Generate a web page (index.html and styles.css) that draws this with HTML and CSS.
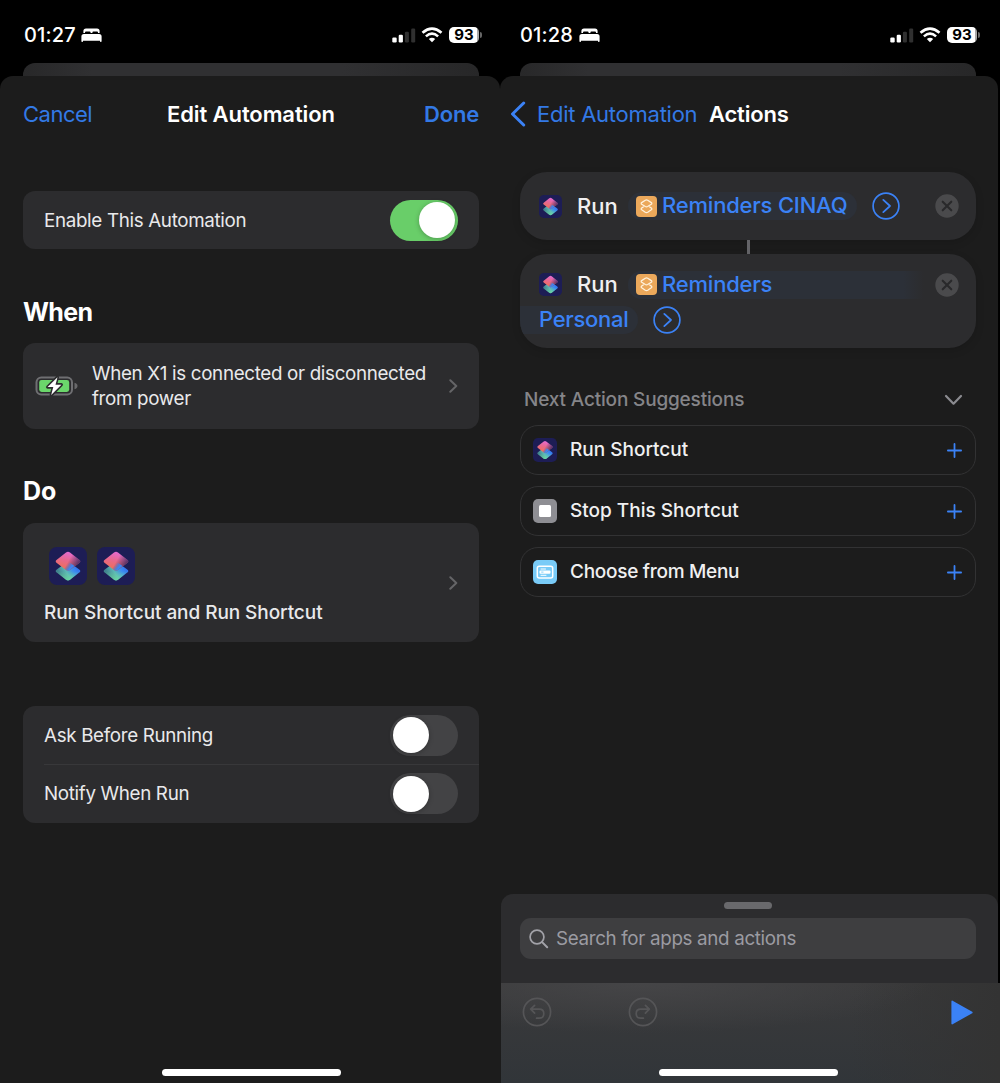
FILE: index.html
```html
<!DOCTYPE html>
<html lang="en">
<head>
<meta charset="utf-8">
<title>Edit Automation</title>
<link rel="stylesheet" href="styles.css">
</head>
<body>
<svg class="defs" aria-hidden="true">
  <defs>
    <linearGradient id="top" x1="0.6" y1="0" x2="0.3" y2="1"><stop offset="0" stop-color="#e46ad6"/><stop offset="0.45" stop-color="#e8688f"/><stop offset="1" stop-color="#f0704e"/></linearGradient>
    <linearGradient id="shade" x1="0.55" y1="0.4" x2="1" y2="0.6"><stop offset="0" stop-color="#1d1d55" stop-opacity="0"/><stop offset="1" stop-color="#1d1d55" stop-opacity="0.8"/></linearGradient>
    <linearGradient id="bottom" x1="0.15" y1="0.7" x2="0.9" y2="0.4"><stop offset="0" stop-color="#3f7f8c"/><stop offset="0.4" stop-color="#5cb7b4"/><stop offset="0.75" stop-color="#3c8df0"/><stop offset="1" stop-color="#3477f0"/></linearGradient>
    <linearGradient id="mint" x1="0" y1="0.5" x2="0" y2="1"><stop offset="0" stop-color="#6fe0a0" stop-opacity="0"/><stop offset="1" stop-color="#6fe0a0" stop-opacity="0.8"/></linearGradient>
    <linearGradient id="blend" x1="0.4" y1="0.1" x2="0.8" y2="0.35"><stop offset="0" stop-color="#3c86f4" stop-opacity="0"/><stop offset="1" stop-color="#3c86f4"/></linearGradient>
    <symbol id="shortcuts" viewBox="0 0 38 38">
      <rect width="38" height="38" rx="8" fill="#1d1d55"/>
      <path d="M17.300 15.400Q19 14.200 20.700 15.400L30.200 22.400Q32.400 24 30.200 25.600L21 32.700Q19 34.100 17 32.700L7.800 25.600Q5.600 24 7.800 22.400Z" fill="url(#bottom)"/>
      <path d="M17.300 15.400Q19 14.200 20.700 15.400L30.200 22.400Q32.400 24 30.200 25.600L21 32.700Q19 34.100 17 32.700L7.800 25.600Q5.600 24 7.800 22.400Z" fill="url(#mint)"/>
      <path d="M17 5.400Q19 4 21 5.400L30.200 12.700Q32.400 14.300 30.200 15.900L21 22.900Q19 24.300 17 22.900L7.800 15.900Q5.600 14.300 7.800 12.700Z" fill="url(#top)"/>
      <path d="M17 5.400Q19 4 21 5.400L30.200 12.700Q32.400 14.300 30.200 15.900L21 22.900Q19 24.300 17 22.900L7.800 15.900Q5.600 14.300 7.800 12.700Z" fill="url(#shade)"/>
      <path d="M20.700 15.400L25.500 18.900L21 22.900Q19 24.300 17 22.900L15 21.400V17Z" fill="url(#blend)"/>
    </symbol>
    <symbol id="reminder" viewBox="0 0 21 21">
      <rect width="21" height="21" rx="4" fill="#eba85b"/>
      <g fill="none" stroke="#fff3df" stroke-width="1.250" stroke-linejoin="round" stroke-linecap="round">
        <path d="M9.300 4.300Q10.500 3.600 11.700 4.300L15.300 6.600Q16.300 7.400 15.300 8.200L11.700 10.500Q10.500 11.200 9.300 10.500L5.700 8.200Q4.700 7.400 5.700 6.600Z"/>
        <path d="M7.300 10.900L5.700 12.100Q4.700 12.900 5.700 13.700L9.300 16.200Q10.500 16.900 11.700 16.200L15.300 13.700Q16.300 12.900 15.300 12.100L13.700 10.900"/>
      </g>
    </symbol>
    <symbol id="bed" viewBox="0 0 21 14">
      <path d="M2.400 5V3Q2.400 .4 5 .4H16Q18.600 .4 18.600 3V5H17V4.500Q17 3.500 16 3.500H12.400Q11.400 3.500 11.400 4.500V5H9.600V4.500Q9.600 3.500 8.600 3.500H5Q4 3.500 4 4.500V5Z" fill="#fff"/>
      <path d="M.4 8.500Q.4 6 2.900 6H18.100Q20.600 6 20.600 8.500V13.200Q20.600 13.900 19.800 13.900Q19 13.900 19 13.200V12.700H2V13.200Q2 13.900 1.200 13.900Q.4 13.900 .4 13.200Z" fill="#fff"/>
    </symbol>
    <symbol id="signal" viewBox="0 0 24 15">
      <rect x=".3" y="9.500" width="4.400" height="5" rx="1.200" fill="#fff"/><rect x="6.700" y="6.800" width="4.200" height="7.700" rx="1.200" fill="#fff"/>
      <rect x="12.900" y="3.700" width="4" height="10.800" rx="1.200" fill="#303030"/><rect x="19.200" y=".5" width="4" height="14" rx="1.200" fill="#303030"/>
    </symbol>
    <symbol id="wifi" viewBox="0 0 22 16">
      <path d="M1.500 5.800Q11-2.400 20.500 5.800" fill="none" stroke="#fff" stroke-width="2.700"/>
      <path d="M4.900 9.400Q11 4 17.100 9.400" fill="none" stroke="#fff" stroke-width="2.600"/>
      <path d="M7.800 12.100Q11 9.300 14.200 12.100L11 15.300Z" fill="#fff"/>
    </symbol>
    <symbol id="close" viewBox="0 0 24 24"><circle cx="12" cy="12" r="11.700" fill="#4a4a4c"/><path d="M7.700 7.700L16.300 16.300M16.300 7.700L7.700 16.300" stroke="#29292b" stroke-width="2.100" stroke-linecap="round"/></symbol>
    <symbol id="go" viewBox="0 0 28 28"><circle cx="14" cy="14" r="12.900" fill="none" stroke="#3b82f6" stroke-width="1.700"/><path d="M11.300 7.900L18 14L11.300 20.100" fill="none" stroke="#3b82f6" stroke-width="1.800" stroke-linecap="round" stroke-linejoin="round"/></symbol>
    <symbol id="chevron" viewBox="0 0 9 14"><path d="M1.300 1.300L7.300 7L1.300 12.700" fill="none" stroke="#656567" stroke-width="2" stroke-linecap="round" stroke-linejoin="round"/></symbol>
    <symbol id="plus" viewBox="0 0 15 15"><path d="M7.500 .9V14.100M.9 7.500H14.100" stroke="#3b82f6" stroke-width="1.800" stroke-linecap="round"/></symbol>
  </defs>
</svg>
<main class="screens">
  <section class="phone phone-left">
    <header class="status">
      <span class="time">01:27</span><svg class="bed"><use href="#bed"/></svg>
      <svg class="signal"><use href="#signal"/></svg><svg class="wifi"><use href="#wifi"/></svg>
      <span class="battery">93</span><i class="battery-tip"></i>
    </header>
    <div class="peek"></div>
    <div class="sheet">
      <nav class="nav nav-edit"><a class="cancel">Cancel</a><h1>Edit Automation</h1><a class="done">Done</a></nav>
      <div class="card row enable"><span class="label">Enable This Automation</span><i class="toggle on"></i></div>
      <h2 class="when-title">When</h2>
      <div class="card trigger">
        <svg class="charging" viewBox="0 0 44 22">
          <rect x="1.500" y="2.500" width="35.500" height="17" rx="4.800" fill="none" stroke="#6f6f72" stroke-width="2"/>
          <rect x="4.200" y="5" width="30" height="12" rx="2.400" fill="#6bd66b"/>
          <path d="M39.500 7.800Q42.500 8.600 42.500 11Q42.500 13.400 39.500 14.200Z" fill="#69696b"/>
          <path d="M22.500 2.200L12.600 12.100H18.300L16.200 20L26.400 9.700H20.500Z" fill="#fff" stroke="#2c2c2e" stroke-width="3.200" stroke-linejoin="round" paint-order="stroke"/>
        </svg>
        <p class="trigger-text"><span>When X1 is connected or disconnected</span><br><span>from power</span></p>
        <svg class="chevron"><use href="#chevron"/></svg>
      </div>
      <h2 class="do-title">Do</h2>
      <div class="card do-card">
        <div>
          <div class="icons"><svg><use href="#shortcuts"/></svg><svg><use href="#shortcuts"/></svg></div>
          <p class="summary">Run Shortcut and Run Shortcut</p>
        </div>
        <svg class="chevron"><use href="#chevron"/></svg>
      </div>
      <div class="card options">
        <div class="row"><span class="label">Ask Before Running</span><i class="toggle"></i></div>
        <div class="row divided"><span class="label">Notify When Run</span><i class="toggle"></i></div>
      </div>
    </div>
    <i class="home"></i>
  </section>

  <section class="phone phone-right">
    <header class="status">
      <span class="time">01:28</span><svg class="bed"><use href="#bed"/></svg>
      <svg class="signal"><use href="#signal"/></svg><svg class="wifi"><use href="#wifi"/></svg>
      <span class="battery">93</span><i class="battery-tip"></i>
    </header>
    <div class="peek"></div>
    <div class="sheet">
      <nav class="nav nav-actions">
        <svg class="back" viewBox="0 0 16 26"><path d="M13.700 2L2.500 13L13.700 24" fill="none" stroke="#3b82f6" stroke-width="3" stroke-linecap="round" stroke-linejoin="round"/></svg>
        <a class="back-label">Edit Automation</a><h1 class="actions-title">Actions</h1>
      </nav>
      <div class="action action-one">
        <svg class="app"><use href="#shortcuts"/></svg><span class="run">Run</span>
        <span class="chip"><svg><use href="#reminder"/></svg><span>Reminders CINAQ</span></span>
        <svg class="go"><use href="#go"/></svg><svg class="close"><use href="#close"/></svg>
      </div>
      <i class="connector"></i>
      <div class="action action-two">
        <div class="action-line">
          <svg class="app"><use href="#shortcuts"/></svg><span class="run">Run</span>
          <span class="chip chip-open"><svg><use href="#reminder"/></svg><span>Reminders</span></span>
          <svg class="close"><use href="#close"/></svg>
        </div>
        <div class="action-line"><span class="chip-rest">Personal</span><svg class="go"><use href="#go"/></svg></div>
      </div>
      <div class="suggest-head"><span class="suggest-title">Next Action Suggestions</span>
        <svg viewBox="0 0 18 12"><path d="M1.500 2L9 9.700L16.500 2" fill="none" stroke="#8b8b90" stroke-width="2.200" stroke-linecap="round" stroke-linejoin="round"/></svg>
      </div>
      <div class="suggestions">
        <div class="suggestion"><svg class="s-icon"><use href="#shortcuts"/></svg><span>Run Shortcut</span><svg class="plus"><use href="#plus"/></svg></div>
        <div class="suggestion"><svg class="s-icon" viewBox="0 0 24 24"><rect width="24" height="24" rx="5" fill="#8e8e93"/><rect x="6" y="6" width="12" height="12" rx="1.500" fill="#fff"/></svg><span>Stop This Shortcut</span><svg class="plus"><use href="#plus"/></svg></div>
        <div class="suggestion"><svg class="s-icon" viewBox="0 0 24 24"><rect width="24" height="24" rx="5" fill="#79cbf7"/><rect x="4.300" y="6.200" width="15.400" height="11.800" rx="2" fill="none" stroke="#fff" stroke-width="1.500"/><rect x="6.500" y="10.500" width="11" height="3.200" rx="1" fill="#fff"/><path d="M8 9H12.500M8 15.300H13" stroke="#fff" stroke-width="1" stroke-linecap="round"/><path d="M8.200 12.100H10.500" stroke="#79cbf7" stroke-width=".9"/></svg><span class="s-menu">Choose from Menu</span><svg class="plus"><use href="#plus"/></svg></div>
      </div>
    </div>
    <div class="drawer">
      <i class="grabber"></i>
      <div class="search">
        <svg viewBox="0 0 20 20"><circle cx="8" cy="8" r="6.900" fill="none" stroke="#a2a2a8" stroke-width="1.700"/><path d="M13.100 13.100L18.200 18.200" stroke="#a2a2a8" stroke-width="2" stroke-linecap="round"/></svg>
        <span>Search for apps and actions</span>
      </div>
    </div>
    <div class="toolbar">
      <svg class="history" viewBox="0 0 30 30" fill="none" stroke="#555557" stroke-width="1.700" stroke-linecap="round" stroke-linejoin="round"><circle cx="15" cy="15" r="13.600"/><path d="M12.600 8.300L8.700 12.200L12.600 16.100M8.900 12.200H17.300Q21.800 12.200 21.800 16.700Q21.800 21.200 17.300 21.200H14.600"/></svg>
      <svg class="history" viewBox="0 0 30 30" fill="none" stroke="#555557" stroke-width="1.700" stroke-linecap="round" stroke-linejoin="round"><circle cx="15" cy="15" r="13.600"/><path d="M17.400 8.300L21.300 12.200L17.400 16.100M21.100 12.200H12.700Q8.200 12.200 8.200 16.700Q8.200 21.200 12.700 21.200H15.400"/></svg>
      <svg class="play" viewBox="0 0 22 25"><path d="M1.200 1.400L20.800 12.500L1.200 23.600Z" fill="#3b82f6" stroke="#3b82f6" stroke-width="1.600" stroke-linejoin="round"/></svg>
    </div>
    <i class="home"></i>
  </section>
</main>
</body>
</html>
```
FILE: styles.css
```css
* { box-sizing: border-box; }
body { margin: 0; background: #000; color: #e9e9eb; font-family: Inter, "Liberation Sans", sans-serif; font-size: 19px; }
h1, h2, p { margin: 0; }
svg, i { display: block; flex: none; }
span, a, h1, h2 { white-space: nowrap; }
.defs { position: absolute; width: 0; height: 0; }
.screens { display: flex; width: 1000px; height: 1083px; overflow: hidden; }
.phone { position: relative; display: flex; flex-direction: column; width: 500px; height: 1083px; }

/* Status bar */
.status { display: flex; align-items: center; height: 63px; padding: 7px 18px 0 24px; }
.phone-right .status { padding-left: 20px; padding-right: 20px; }
.time { width: 52px; color: #fff; font-size: 20px; font-weight: 500; letter-spacing: .15px; }
.bed { width: 21px; height: 14px; margin-left: 5px; }
.phone-right .bed { margin-left: 7px; }
.signal { width: 24px; height: 15px; margin-left: auto; }
.wifi { width: 22px; height: 16px; margin-left: 5px; }
.battery { width: 30px; height: 16px; margin-left: 6px; border-radius: 5px; background: linear-gradient(90deg, #fff 92%, #aaa 92%); color: #000; font-size: 15px; font-weight: 700; line-height: 16px; text-align: center; }
.battery-tip { width: 2px; height: 6px; margin-left: 1px; border-radius: 0 3px 3px 0; background: #666; }

/* Sheets */
.peek { flex: none; width: 456px; height: 13px; margin-left: 23px; border-radius: 12px 12px 0 0; background: linear-gradient(90deg, #282829, #303032 15%, #303032 70%, #272728); }
.phone-right .peek { margin-left: 20px; }
.sheet { flex: 1; min-height: 0; border-radius: 13px 13px 0 0; background: #1c1c1c; }
.phone-left .sheet { padding: 0 21px 0 23px; }
.phone-right .sheet { width: 498px; padding: 0 22px 0 20px; }
.nav { display: flex; align-items: center; height: 76px; padding-bottom: 1px; }
.nav a { color: #3379e5; font-size: 22px; letter-spacing: -.25px; }
.nav h1 { color: #fff; font-size: 22px; font-weight: 600; letter-spacing: -.1px; }
.nav .cancel { width: 144px; letter-spacing: -.5px; }
.nav .done { margin-left: auto; font-weight: 600; letter-spacing: -.2px; }
.back { width: 16px; height: 26px; margin-left: -10px; }
.nav .back-label { width: 160px; margin-left: 11px; }
.nav .actions-title { margin-left: 12px; letter-spacing: -.2px; }

/* Cards and toggles */
.card { border-radius: 12px; background: #2c2c2e; }
.row { display: flex; align-items: center; justify-content: space-between; height: 58px; padding: 0 21px; }
.enable { margin-top: 39px; }
.label, .trigger-text, .search { font-size: 18.8px; letter-spacing: -.33px; }
.toggle { width: 68px; height: 41px; padding: 2.5px 3px; border-radius: 21px; background: #434345; }
.toggle::before { content: ""; display: block; width: 36px; height: 36px; border-radius: 50%; background: #fff; box-shadow: 0 1px 5px #0004; }
.toggle.on { background: #69ce69; }
.toggle.on::before { margin-left: auto; }
h2 { height: 30px; color: #fff; font-size: 25px; font-weight: 700; line-height: 31px; letter-spacing: -.6px; }
.when-title { margin-top: 48px; }
.trigger { display: flex; align-items: center; height: 86px; margin-top: 16px; padding: 0 21px 0 12px; }
.charging { width: 44px; height: 22px; }
.trigger-text { flex: 1; margin-left: 13px; line-height: 25px; }
.chevron { width: 9px; height: 14px; }
.do-title { margin-top: 47px; letter-spacing: 0; }
.do-card { display: flex; align-items: center; justify-content: space-between; height: 119px; margin-top: 17px; padding: 0 21px; }
.icons { display: flex; gap: 10px; padding: 6px 0 0 5px; }
.icons svg { width: 38px; height: 38px; }
.summary { margin-top: 15px; font-weight: 500; line-height: 25px; letter-spacing: -.07px; }
.options { margin-top: 64px; }
.divided { height: 59px; background: linear-gradient(#38383a, #38383a) 21px 0 / 100% 1px no-repeat; }

/* Actions */
.action { border-radius: 27px; background: #2c2c2e; color: #f0f0f1; font-size: 22px; box-shadow: 0 3px 8px #0002; }
.action-one { display: flex; align-items: center; height: 68px; margin-top: 20px; padding: 0 17px 0 19px; }
.app { width: 23px; height: 23px; }
.run { width: 41px; margin-left: 15px; font-weight: 500; line-height: 26px; padding-bottom: 1px; }
.chip { display: flex; align-items: center; gap: 5px; width: 229px; height: 28px; margin-left: 10px; padding-left: 8px; border-radius: 14px; background: #2c3038; color: #3b82f6; font-weight: 500; letter-spacing: -.2px; }
.chip span { padding-bottom: 1px; line-height: 27px; }
.chip svg { width: 21px; height: 21px; }
.go { width: 28px; height: 28px; margin-left: 15px; }
.close { width: 24px; height: 24px; margin-left: auto; }
.connector { width: 3px; height: 14px; margin-left: 227px; background: #646468; }
.action-two { height: 94px; padding-top: 13px; overflow: hidden; }
.action-line { display: flex; align-items: center; height: 35px; padding: 0 17px 0 19px; }
.chip-open { width: 296px; border-radius: 14px 0 0 14px; background: linear-gradient(90deg, #2c3038 93%, #2c2c2e); }
.chip-rest { width: 118px; height: 28px; margin-left: -19px; padding-left: 19px; border-radius: 0 14px 14px 0; background: #2c3038; color: #3b82f6; font-weight: 500; line-height: 27px; letter-spacing: -.3px; }

/* Suggestions */
.suggest-head { display: flex; align-items: center; justify-content: space-between; height: 50px; margin-top: 27px; padding: 0 13px 0 4px; color: #858589; font-weight: 500; letter-spacing: -.17px; }
.suggest-head svg { width: 19px; height: 12px; }
.suggest-title { padding-bottom: 2px; }
.suggestions { display: flex; flex-direction: column; gap: 11px; }
.suggestion { display: flex; align-items: center; height: 50px; padding: 0 13px 0 12px; border: 1px solid #323233; border-radius: 18px; color: #f0f0f1; font-weight: 500; }
.suggestion span { padding-bottom: 1px; }
.suggestion .s-menu { letter-spacing: -.28px; }
.s-icon { width: 24px; height: 24px; margin-right: 13px; }
.plus { width: 15px; height: 15px; margin-left: auto; }

/* Drawer and toolbar */
.drawer { position: absolute; left: 1px; top: 894px; width: 497px; height: 89px; padding: 8px 22px 0 19px; border-radius: 12px 12px 0 0; background: #2c2c2e; }
.grabber { width: 48px; height: 7px; margin: 0 auto 9px 204px; border-radius: 4px; background: #69696c; }
.search { display: flex; align-items: center; height: 41px; padding-left: 9px; border-radius: 11px; background: #3e3e40; color: #9b9ba2; }
.search svg { width: 20px; height: 20px; margin-right: 7px; }
.toolbar { position: absolute; left: 1px; top: 983px; display: flex; align-items: flex-start; width: 499px; height: 100px; padding: 14px 27px 0 21px; background: radial-gradient(ellipse 290px 50px at 28% 0, #454547, #45454700), linear-gradient(90deg, #39393a00 70%, #333 100%), linear-gradient(#3a3a3b, #313539); }
.history { width: 30px; height: 30px; margin-right: 76px; }
.play { width: 22px; height: 25px; margin: 3px 0 0 auto; }
.home { position: absolute; left: 162px; top: 1069px; width: 179px; height: 7px; border-radius: 4px; background: #fff; }
.phone-right .home { left: 159px; }
```
